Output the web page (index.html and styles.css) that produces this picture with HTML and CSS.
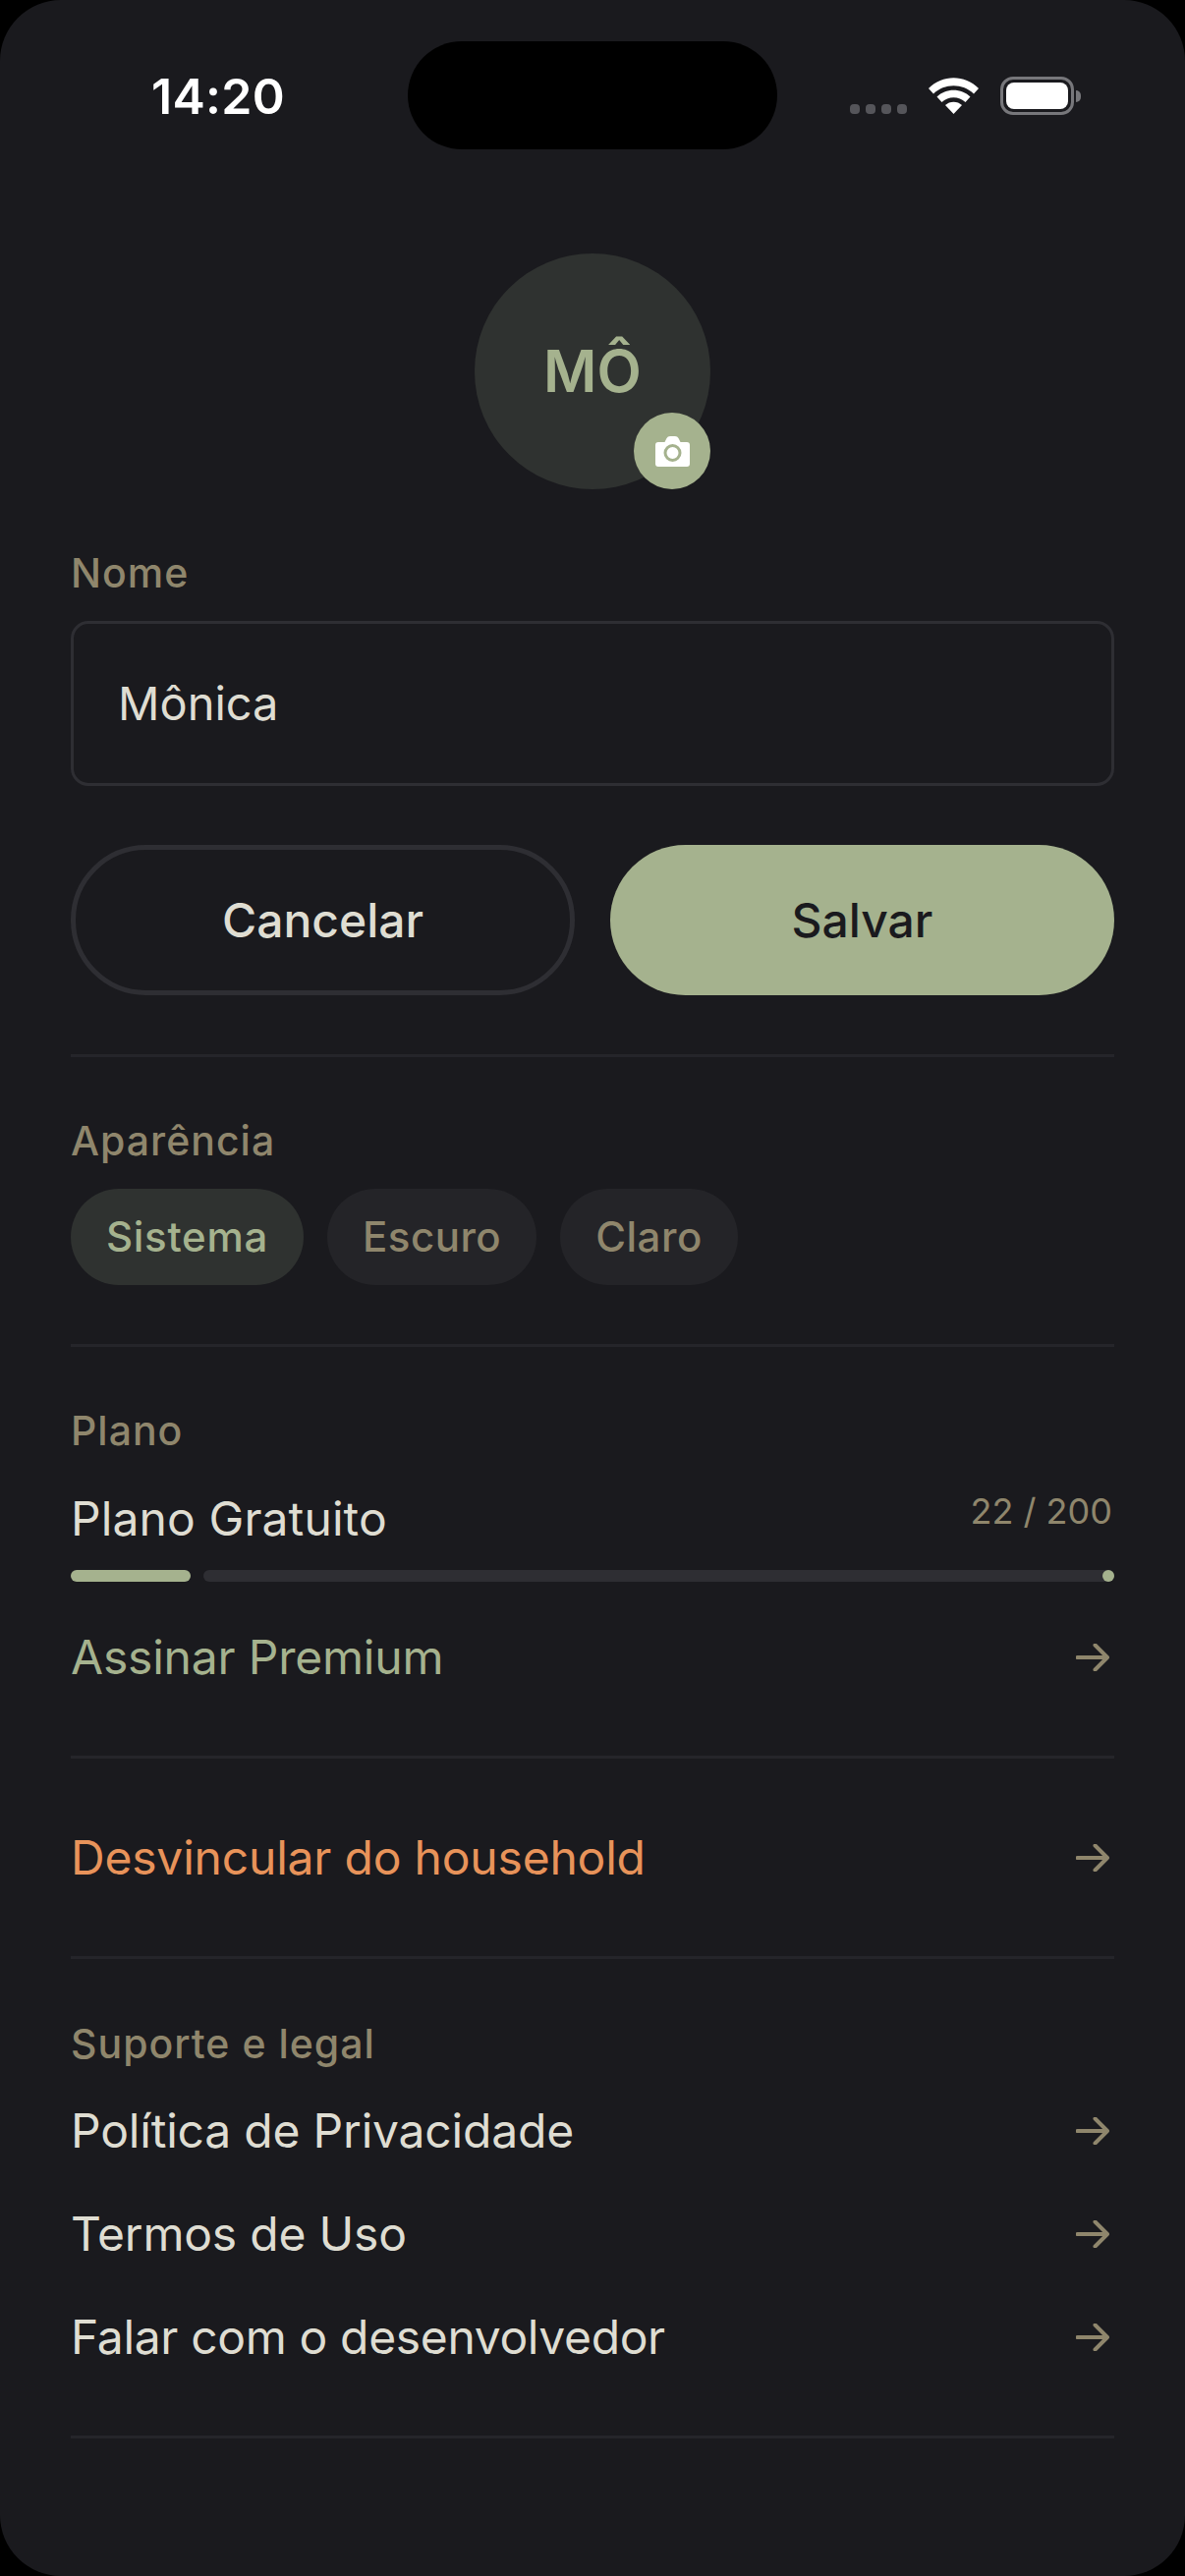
FILE: index.html
```html
<!DOCTYPE html>
<html lang="pt-BR">
<head>
<meta charset="utf-8">
<title>Perfil</title>
<link rel="stylesheet" href="styles.css">
</head>
<body>
<div class="screen">
  <div class="island"></div>
  <header class="status">
    <span class="time">14:20</span>
    <div class="indicators">
      <div class="signal"><i></i><i></i><i></i><i></i></div>
      <svg class="wifi" viewBox="0 0 51 37"><path d="M0 11C14 -3.500 37 -3.500 51 11L46 16.500C35 5.500 16 5.500 5 16.500Z"/><path d="M8.500 19.500C17.500 10.500 33.500 10.500 42.500 19.500L37.500 25C31 18.500 20 18.500 13.500 25Z"/><path d="M17 28C21.500 23.500 29.500 23.500 34 28L25.500 37Z"/></svg>
      <div class="battery"><div class="battery-fill"></div></div>
      <div class="battery-nub"></div>
    </div>
  </header>

  <div class="avatar">
    <span class="initials">MÔ</span>
    <div class="badge">
      <svg class="camera" viewBox="0 0 35 31"><path class="camera-body" d="M3 6H9.500L11.500 2Q12.500 0 15 0H20Q22.500 0 23.500 2L25.500 6H32Q35 6 35 9V28Q35 31 32 31H3Q0 31 0 28V9Q0 6 3 6Z"/><circle class="camera-ring" cx="17.500" cy="17" r="7.500"/></svg>
    </div>
  </div>

  <div class="label label-name">Nome</div>
  <div class="input">Mônica</div>
  <div class="actions">
    <div class="btn btn-ghost">Cancelar</div>
    <div class="btn btn-primary">Salvar</div>
  </div>

  <hr class="divider">

  <section class="section">
    <div class="label">Aparência</div>
    <div class="pills">
      <div class="pill pill-active">Sistema</div>
      <div class="pill">Escuro</div>
      <div class="pill">Claro</div>
    </div>
  </section>

  <hr class="divider">

  <section class="section section-plan">
    <div class="label">Plano</div>
    <div class="plan-row">
      <span class="plan-name">Plano Gratuito</span>
      <span class="plan-count">22 / 200</span>
    </div>
    <div class="progress">
      <div class="progress-fill"></div>
      <div class="progress-track"></div>
      <div class="progress-dot"></div>
    </div>
    <div class="row row-accent">
      <span>Assinar Premium</span>
      <svg class="arrow" viewBox="0 0 34 28"><path d="M1.500 14H32M19.500 1.500L32 14L19.500 26.500"/></svg>
    </div>
  </section>

  <hr class="divider divider-tight">

  <section class="section section-danger">
    <div class="row row-danger">
      <span>Desvincular do household</span>
      <svg class="arrow" viewBox="0 0 34 28"><path d="M1.500 14H32M19.500 1.500L32 14L19.500 26.500"/></svg>
    </div>
  </section>

  <hr class="divider divider-tight">

  <section class="section section-support">
    <div class="label">Suporte e legal</div>
    <div class="rows">
      <div class="row">
        <span>Política de Privacidade</span>
        <svg class="arrow" viewBox="0 0 34 28"><path d="M1.500 14H32M19.500 1.500L32 14L19.500 26.500"/></svg>
      </div>
      <div class="row">
        <span>Termos de Uso</span>
        <svg class="arrow" viewBox="0 0 34 28"><path d="M1.500 14H32M19.500 1.500L32 14L19.500 26.500"/></svg>
      </div>
      <div class="row">
        <span class="row-long">Falar com o desenvolvedor</span>
        <svg class="arrow" viewBox="0 0 34 28"><path d="M1.500 14H32M19.500 1.500L32 14L19.500 26.500"/></svg>
      </div>
    </div>
  </section>

  <hr class="divider divider-tight">
</div>
</body>
</html>
```

FILE: styles.css
```css
* { box-sizing: border-box; }
html, body { margin: 0; padding: 0; background: #000; }
body { font-family: Inter, "Liberation Sans", sans-serif; }
.screen {
  position: relative;
  width: 1206px;
  height: 2622px;
  padding: 0 72px;
  background: #1a1a1e;
  border-radius: 62px;
  overflow: hidden;
  color: #dfddd2;
}
.island {
  position: absolute;
  top: 42px;
  left: 415px;
  width: 376px;
  height: 110px;
  border-radius: 55px;
  background: #000;
}
.status {
  height: 152px;
  padding-top: 64px;
  display: flex;
  justify-content: space-between;
  align-items: flex-start;
}
.time {
  margin-left: 82px;
  font-size: 50px;
  line-height: 68px;
  font-weight: 600;
  letter-spacing: 0.3px;
  color: #fff;
}
.indicators {
  display: flex;
  align-items: flex-start;
  margin-right: 34px;
  margin-top: 15px;
}
.signal { display: flex; gap: 6px; margin-top: 27px; margin-right: 22px; }
.signal i { display: block; width: 10px; height: 10px; border-radius: 4px; background: #55555a; }
.wifi { width: 51px; height: 37px; fill: #fff; margin-right: 22px; }
.battery {
  width: 75px;
  height: 39px;
  margin-top: -1px;
  padding: 3px;
  border: 3px solid #77777b;
  border-radius: 13px;
}
.battery-fill { width: 100%; height: 100%; background: #fff; border-radius: 8px; }
.battery-nub {
  width: 5px;
  height: 12px;
  margin: 13px 0 0 2px;
  background: #77777b;
  border-radius: 0 6px 6px 0;
}
.avatar {
  position: relative;
  width: 240px;
  height: 240px;
  margin: 106px auto 0;
  border-radius: 50%;
  background: #2f3230;
  display: flex;
  align-items: center;
  justify-content: center;
}
.initials { font-size: 59px; line-height: 72px; font-weight: 600; color: #a5b28e; }
.badge {
  position: absolute;
  right: 0;
  bottom: 0;
  width: 78px;
  height: 78px;
  border-radius: 50%;
  background: #a5b28e;
  display: flex;
  align-items: center;
  justify-content: center;
}
.camera { width: 35px; height: 31px; }
.camera-body { fill: #fff; }
.camera-ring { fill: #fff; stroke: #a5b28e; stroke-width: 3px; }
.label { font-size: 41px; line-height: 48px; font-weight: 500; letter-spacing: 1px; color: #8f866c; }
.label-name { margin-top: 61px; }
.input {
  margin-top: 25px;
  height: 168px;
  padding: 0 45px 2px;
  display: flex;
  align-items: center;
  border: 3px solid #2e2e33;
  border-radius: 18px;
  font-size: 47px;
}
.actions { display: grid; grid-template-columns: 1fr 1fr; gap: 36px; margin-top: 60px; }
.btn {
  height: 153px;
  border-radius: 77px;
  display: flex;
  align-items: center;
  justify-content: center;
  font-size: 48px;
  font-weight: 500;
}
.btn-ghost { border: 5px solid #2e2e33; }
.btn-primary { background: #a5b28e; color: #1a1a1e; }
.divider { height: 3px; margin: 60px 0 0; border: 0; background: #25252a; }
.divider-tight { margin-top: 48px; }
.section { padding-top: 61px; }
.pills { display: flex; gap: 24px; margin-top: 25px; }
.pill {
  height: 98px;
  padding: 0 36px 2px;
  display: flex;
  align-items: center;
  border-radius: 49px;
  background: #242428;
  color: #8f866c;
  font-size: 42px;
  font-weight: 500;
  letter-spacing: 0.5px;
}
.pill-active { background: #2f3230; color: #a5b28e; letter-spacing: 0.7px; }
.plan-row {
  margin-top: 36px;
  display: flex;
  justify-content: space-between;
  align-items: flex-start;
}
.plan-name { font-size: 48px; line-height: 60px; letter-spacing: 0.1px; }
.plan-count { font-size: 36px; line-height: 44px; margin-right: 2px; color: #8f866c; }
.progress { display: flex; align-items: center; gap: 13px; margin-top: 22px; position: relative; }
.progress-fill { width: 122px; height: 12px; border-radius: 6px; background: #a5b28e; }
.progress-track { flex: 1; height: 12px; background: #2e2e33; border-radius: 6px; }
.progress-dot {
  position: absolute;
  right: 0;
  top: 0;
  width: 12px;
  height: 12px;
  border-radius: 50%;
  background: #a5b28e;
}
.row {
  height: 105px;
  display: flex;
  align-items: center;
  justify-content: space-between;
  font-size: 48px;
  letter-spacing: -0.2px;
}
.row-long { letter-spacing: -0.35px; }
.row-accent { margin-top: 24px; color: #a5b28e; }
.row-danger { color: #e8935a; }
.arrow {
  width: 34px;
  height: 28px;
  margin-right: 5px;
  fill: none;
  stroke: #8f866c;
  stroke-width: 4px;
  stroke-linecap: round;
  stroke-linejoin: round;
}
.section-danger { padding-top: 48px; }
.section-support { padding-top: 62px; }
.section-support .rows { margin-top: 12px; }
```
